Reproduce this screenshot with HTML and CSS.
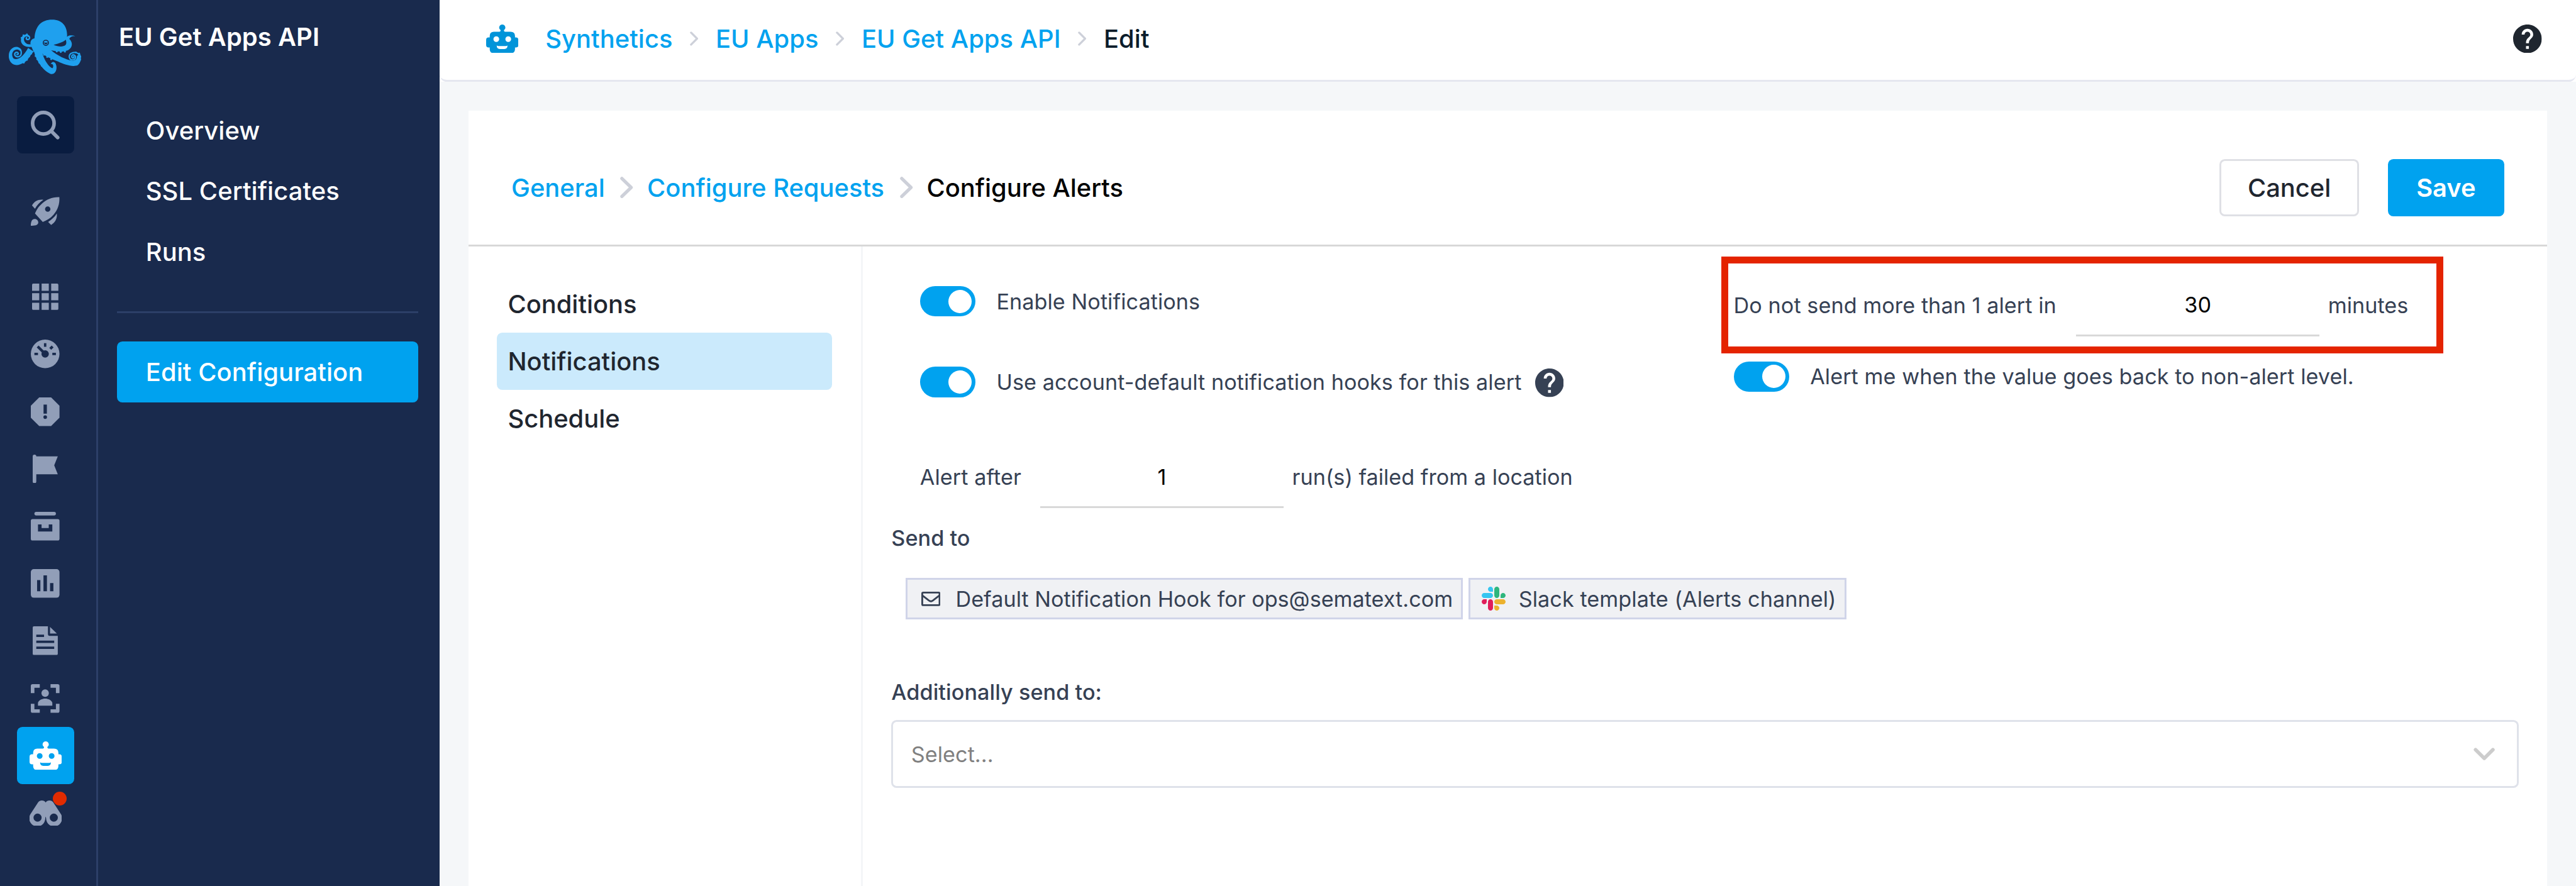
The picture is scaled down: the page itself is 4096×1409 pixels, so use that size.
FILE: index.html
```html
<!DOCTYPE html>
<html lang="en">
<head>
<meta charset="utf-8">
<title>EU Get Apps API</title>
<link rel="stylesheet" href="styles.css">
</head>
<body>
<svg class="defs" aria-hidden="true">
  <symbol id="robot" viewBox="0 0 54 48">
    <path fill-rule="evenodd" d="M27 0a5.2 5.2 0 0 0-2.7 9.6Q24.300 12 22.500 12H13Q6 12 6 19V21.700H4Q0 21.700 0 26V34.500Q0 38.300 4 38.300H6V41Q6 48 13 48H41Q48.300 48 48.300 41V38.300H50Q54 38.300 54 34.500V26Q54 21.700 50 21.700H48.300V19Q48.300 12 41 12H31.500Q29.700 12 29.700 9.600A5.200 5.200 0 0 0 27 0ZM17 19.700a4.800 4.800 0 1 1 0 9.600a4.800 4.800 0 0 1 0-9.600ZM37 19.700a4.800 4.800 0 1 1 0 9.600a4.800 4.800 0 0 1 0-9.600ZM17.700 35Q19 36 21 36H32.500Q35 36 35.700 35Q36 41 30.500 41H23Q17.700 41 17.700 35Z"/>
  </symbol>
  <symbol id="help" viewBox="2 2 20 20">
    <path d="M12 2C6.480 2 2 6.480 2 12s4.480 10 10 10 10-4.480 10-10S17.520 2 12 2zm1 17h-2v-2h2v2zm2.070-7.750l-.9.920C13.450 12.900 13 13.500 13 15h-2v-.5c0-1.100.45-2.100 1.170-2.830l1.240-1.260c.37-.36.59-.86.59-1.410 0-1.100-.9-2-2-2s-2 .9-2 2H8c0-2.210 1.790-4 4-4s4 1.790 4 4c0 .88-.36 1.680-.93 2.250z"/>
  </symbol>
</svg>
<div class="app">
  <nav class="rail">
    <svg class="logo" viewBox="15 25 364 276">
      <g class="logo-fill">
        <path d="M144 120C148 58 178 26 233 26C282 26 308 58 308 104Q308 116 304 124C290 140 264 146 240 152C262 162 288 164 299 154C309 144 301 130 301 122C305 106 328 100 349 109C334 107 321 113 319 123C336 138 335 160 322 172C308 188 270 190 228 180L180 192L140 188L128 160C118 142 126 122 144 120Z"/>
        <path d="M176 190L226 178C262 208 300 226 334 232C350 232 358 222 357 208L372 196C382 212 379 238 362 254C338 266 296 252 262 236C228 222 200 212 176 190Z"/>
        <path d="M142 184C148 226 188 284 224 298C244 304 258 284 254 258C250 234 232 232 225 250C236 244 242 258 235 270C216 266 190 224 182 188Z"/>
        <path d="M112 168L140 186C120 206 112 234 86 244C58 262 24 256 16 220C10 190 26 162 54 162C76 164 86 182 78 200C76 180 60 172 46 178C30 186 28 206 38 220C62 236 94 202 112 168Z"/>
        <path d="M130 162C108 166 80 158 76 134C74 112 88 98 106 100C118 102 126 112 122 122C114 108 98 106 92 118C88 132 98 148 118 150L130 150Z"/>
      </g>
      <g class="logo-line">
        <path d="M77 190C80 210 58 220 46 206C40 192 56 184 62 194Q64 202 56 201"/>
        <path d="M119 120C114 130 98 126 104 116"/>
        <path d="M370 214C372 192 346 184 326 196C312 210 320 230 338 228C354 224 354 204 338 202C328 206 330 218 338 218Q344 216 341 211"/>
      </g>
      <g class="logo-fill">
        <circle cx="79" cy="117" r="4"/><circle cx="88" cy="104" r="4"/><circle cx="106" cy="99" r="4"/>
        <circle cx="90" cy="241" r="5"/><circle cx="106" cy="227" r="5"/><circle cx="117" cy="210" r="5"/><circle cx="127" cy="196" r="5"/>
        <circle cx="150" cy="208" r="5"/><circle cx="158" cy="224" r="5"/><circle cx="169" cy="241" r="5"/><circle cx="181" cy="257" r="5"/>
        <circle cx="192" cy="202" r="5"/><circle cx="208" cy="213" r="5"/><circle cx="228" cy="224" r="5"/>
        <circle cx="256" cy="185" r="5"/><circle cx="276" cy="188" r="5"/><circle cx="297" cy="186" r="5"/>
        <circle cx="352" cy="190" r="4"/><circle cx="369" cy="196" r="4"/><circle cx="375" cy="211" r="4"/><circle cx="374" cy="227" r="4"/>
      </g>
      <circle class="logo-eye" cx="201" cy="142" r="13"/>
      <path class="logo-pupil" d="M191 140Q201 143 211 140Q208 149 201 149Q194 149 191 140Z"/>
    </svg>
    <div class="cell search"><svg class="i48 line" viewBox="0 0 48 48"><circle cx="21" cy="21" r="18"/><path d="M35 35L45 45"/></svg></div>
    <div class="cell"><svg class="i48" viewBox="0 0 48 48"><path fill-rule="evenodd" d="M47.800 .5C36 0 27 4 19 11C12 17 9 23 7 28L20 42C26 40 33 36 38 30C45 22 48.500 12 47.800 .5ZM28.300 16.100a4.500 4.500 0 1 1 0 9a4.500 4.500 0 0 1 0-9Z"/><path d="M2 14.500C6 7 13 4 21 5C15 9 10 14 7 20ZM43.500 28C44.500 36 41 43 34 47L29 42C35 38 40 34 43.500 28ZM0 48.500C0 43 1 37 6.500 37C10 37 12.500 39.500 12.500 43C12.500 48 6 48.500 0 48.500Z"/></svg></div>
    <div class="cell apps"><svg class="i44" viewBox="0 0 44 44"><path d="M2 0H12V12H0V2Q0 0 2 0ZM16 0H28V12H16ZM32 0H42Q44 0 44 2V12H32ZM0 16H12V28H0ZM16 16H28V28H16ZM32 16H44V28H32ZM0 32H12V44H2Q0 44 0 42ZM16 32H28V44H16ZM32 32H44V42Q44 44 42 44H32Z"/></svg></div>
    <div class="cell"><svg class="i48" viewBox="0 0 48 48"><circle cx="24" cy="24" r="24"/><g class="cut"><circle cx="24" cy="24" r="6.200"/><path d="M22 6h4v6h-4zM6 22h6v4H6zM36 22h6v4h-6z"/></g><path class="cutline" d="M24 24L11.500 11.500M32.500 15.500L36.500 11.500"/></svg></div>
    <div class="cell"><svg class="i48" viewBox="0 0 48 48"><path d="M14 0H34L48 14V34L34 48H14L0 34V14Z"/><g class="cut"><path d="M21.300 12h5.600v15.200h-5.600z"/><circle cx="24.100" cy="33" r="3"/></g></svg></div>
    <div class="cell"><svg class="i42" viewBox="0 0 42 48"><rect width="6" height="48" rx="3"/><path d="M5 3H42L36 18L42 33H5Z"/></svg></div>
    <div class="cell"><svg class="i48" viewBox="0 0 48 48"><rect x="6" width="36" height="6" rx="3"/><path fill-rule="evenodd" d="M3 12H45Q48 12 48 15V45Q48 48 45 48H3Q0 48 0 45V15Q0 12 3 12ZM12 21V33H36V21H30V27H18V21Z"/></svg></div>
    <div class="cell"><svg class="i48" viewBox="0 0 48 48"><rect width="48" height="48" rx="5"/><path class="cut" d="M10.500 18.500H16V37H10.500ZM21.200 10.500H27V37H21.200ZM32.200 23.500H37.800V37H32.200Z"/></svg></div>
    <div class="cell"><svg class="i42" viewBox="0 0 42 48"><path d="M2 0H25.500V13Q25.500 16 28.500 16H42V46Q42 48 40 48H2Q0 48 0 46V2Q0 0 2 0ZM29 1L40.500 12H29Z"/><path class="cut" d="M6 14h13v4H6zM6 24h30v4H6zM6 34h30v4H6z"/></svg></div>
    <div class="cell"><svg class="i48" viewBox="0 0 48 48"><path d="M3 0H15V6H6V15H0V3Q0 0 3 0ZM33 0H45Q48 0 48 3V15H42V6H33ZM0 33H6V42H15V48H3Q0 48 0 45ZM42 33H48V45Q48 48 45 48H33V42H42ZM12 36V31C14 26.500 19 24.300 24 24.300S34 26.500 36 31V36Z"/><circle cx="24" cy="15" r="6.200"/></svg></div>
    <div class="cell active"><svg class="robot"><use href="#robot"/></svg></div>
    <div class="cell"><svg class="bino" viewBox="0 0 54 42"><path fill-rule="evenodd" d="M1.800 22.500L14.300 3.200C17 -1 24.500 -1 27 3.500C29.500 -1 37 -1 39.700 3.200L52.200 22.500A13.400 13.400 0 1 1 27.700 30Q27 24 26.300 30A13.400 13.400 0 1 1 1.800 22.500ZM13.400 21.900a6.800 6.800 0 1 0 0 13.600a6.800 6.800 0 0 0 0-13.600ZM40.600 21.900a6.800 6.800 0 1 0 0 13.600a6.800 6.800 0 0 0 0-13.600Z"/></svg><i class="badge"></i></div>
  </nav>
  <aside class="side">
    <h1>EU Get Apps API</h1>
    <a>Overview</a>
    <a>SSL Certificates</a>
    <a>Runs</a>
    <hr>
    <a class="current">Edit Configuration</a>
  </aside>
  <main class="main">
    <div class="topwrap">
      <header class="topbar">
        <svg class="robot blue"><use href="#robot"/></svg>
        <span class="crumbs">
          <a>Synthetics</a><svg class="sep" viewBox="0 0 14 24"><path d="M2 2L12 12L2 22"/></svg>
          <a>EU Apps</a><svg class="sep" viewBox="0 0 14 24"><path d="M2 2L12 12L2 22"/></svg>
          <a>EU Get Apps API</a><svg class="sep" viewBox="0 0 14 24"><path d="M2 2L12 12L2 22"/></svg>
          <b>Edit</b>
        </span>
        <svg class="help"><use href="#help"/></svg>
      </header>
    </div>
    <section class="card">
      <div class="cardhead">
        <div class="steps">
          <a>General</a><svg class="bigsep" viewBox="0 0 22 36"><path d="M3 3L18.500 18L3 33"/></svg>
          <a>Configure Requests</a><svg class="bigsep" viewBox="0 0 22 36"><path d="M3 3L18.500 18L3 33"/></svg>
          <b>Configure Alerts</b>
        </div>
        <button class="btn cancel">Cancel</button>
        <button class="btn save">Save</button>
      </div>
      <div class="cardbody">
        <div class="tabs">
          <a>Conditions</a>
          <a class="on">Notifications</a>
          <a>Schedule</a>
        </div>
        <div class="form">
          <div class="cols">
            <div class="col left">
              <div class="row"><i class="toggle"></i><span>Enable Notifications</span></div>
              <div class="row second"><i class="toggle"></i><span>Use account-default notification hooks for this alert</span><svg class="help inline"><use href="#help"/></svg></div>
              <div class="row field after"><span class="pre">Alert after</span><span class="input">1</span><span class="post">run(s) failed from a location</span></div>
            </div>
            <div class="col right">
              <div class="row field"><span class="pre">Do not send more than 1 alert in</span><span class="input">30</span><span class="post">minutes</span></div>
              <div class="row back"><i class="toggle"></i><span>Alert me when the value goes back to non-alert level.</span></div>
              <div class="highlight"></div>
            </div>
          </div>
          <div class="label">Send to</div>
          <div class="chips">
            <div class="chip mailchip"><svg class="mail" viewBox="0 0 32 24"><rect x="1.500" y="1.500" width="29" height="21" rx="1.500"/><path d="M2 6.500L12.500 14.700Q16 17.300 19.500 14.700L30 6.500"/></svg><span>Default Notification Hook for ops@sematext.com</span></div>
            <div class="chip slackchip"><svg class="slack" viewBox="0 0 122.800 122.800"><path fill="#e01e5a" d="M25.800 77.600c0 7.100-5.800 12.900-12.900 12.900S0 84.700 0 77.600s5.800-12.900 12.900-12.900h12.900v12.900zm6.500 0c0-7.100 5.800-12.900 12.900-12.900s12.900 5.800 12.900 12.900v32.300c0 7.100-5.800 12.900-12.900 12.900s-12.900-5.800-12.900-12.900V77.600z"/><path fill="#36c5f0" d="M45.200 25.800c-7.100 0-12.900-5.800-12.900-12.900S38.100 0 45.200 0s12.900 5.800 12.900 12.900v12.900H45.200zm0 6.500c7.100 0 12.900 5.800 12.900 12.900s-5.800 12.900-12.900 12.900H12.900C5.800 58.100 0 52.300 0 45.200s5.800-12.900 12.900-12.900h32.300z"/><path fill="#2eb67d" d="M97 45.200c0-7.100 5.800-12.900 12.900-12.900s12.900 5.800 12.900 12.900-5.800 12.900-12.900 12.900H97V45.200zm-6.500 0c0 7.100-5.800 12.900-12.900 12.900s-12.900-5.800-12.900-12.900V12.900C64.700 5.800 70.500 0 77.600 0s12.900 5.800 12.900 12.900v32.300z"/><path fill="#ecb22e" d="M77.600 97c7.100 0 12.900 5.800 12.900 12.900s-5.800 12.900-12.900 12.900-12.900-5.800-12.900-12.900V97h12.900zm0-6.500c-7.100 0-12.900-5.800-12.900-12.900s5.800-12.900 12.900-12.900h32.300c7.100 0 12.900 5.800 12.900 12.900s-5.800 12.900-12.900 12.900H77.600z"/></svg><span>Slack template (Alerts channel)</span></div>
          </div>
          <div class="label more">Additionally send to:</div>
          <div class="select"><span>Select...</span><svg class="down" viewBox="0 0 36 22"><path d="M3.500 3.500L18 18L32.500 3.500"/></svg></div>
        </div>
      </div>
    </section>
  </main>
</div>
</body>
</html>
```
FILE: styles.css
```css
/* 1rem = 10 design units */
html { font-size: 9.49907px; }
* { box-sizing: border-box; }
body { margin: 0; font-family: Inter, "Liberation Sans", sans-serif; background: #f5f7f9; overflow: hidden; }
.defs { position: absolute; width: 0; height: 0; }
svg { display: block; flex: none; }
h1, hr { margin: 0; border: 0; }
a, span, b { white-space: nowrap; }
i { flex: none; }

.app { display: flex; height: 1409px; }

/* icon rail */
.rail { width: 16.4rem; flex: none; background: #192a4d; border-right: 3px solid #2c3f68; padding: 3.3rem 0 0 1.5rem; fill: #919eb8; }
.logo { width: 12.13rem; height: 9.2rem; }
.logo-fill { fill: #1fa0ee; }
.logo-line { fill: none; stroke: #1fa0ee; stroke-width: 7; stroke-linecap: round; }
.logo-eye { fill: #1fa0ee; stroke: #192a4d; stroke-width: 5; }
.logo-pupil { fill: #192a4d; }
.cell { position: relative; width: 9.6rem; height: 9.6rem; margin-left: 1.3rem; border-radius: .9rem; display: flex; align-items: center; justify-content: center; }
.search { background: #091c40; margin-top: 3.6rem; margin-bottom: 4.8rem; }
.apps { margin-top: 4.8rem; }
.active { background: #00a2ef; fill: #fff; }
.i48 { width: 4.8rem; height: 4.8rem; overflow: visible; }
.i44 { width: 4.4rem; height: 4.4rem; }
.i42 { width: 4.2rem; height: 4.8rem; }
.line { fill: none; stroke: #919eb8; stroke-width: 6; stroke-linecap: round; }
.cut { fill: #192a4d; }
.cutline { stroke: #192a4d; stroke-width: 4.500; }
.robot { width: 5.4rem; height: 4.8rem; }
.bino { width: 5.4rem; height: 4.2rem; }
.badge { position: absolute; left: 6rem; top: 1.2rem; width: 2.4rem; height: 2.4rem; border-radius: 50%; background: #e02b00; }

/* section navigation */
.side { width: 57.2rem; flex: none; background: #192a4d; color: #fff; padding: 3.2rem 3.6rem 0 3.2rem; font-size: 4.2rem; letter-spacing: .01rem; }
.side h1 { font-size: 4.2rem; font-weight: 600; line-height: 6rem; padding-left: .3rem; margin-bottom: 7.5rem; }
.side a { display: flex; align-items: center; height: 10.2rem; padding-left: 4.8rem; font-weight: 500; border-radius: .9rem; }
.side hr { height: 3px; background: #2c3f68; margin: 4.8rem 0; }
.side .current { background: #00a2ef; }

/* top bar */
.main { flex: 1; min-width: 0; display: flex; flex-direction: column; }
.topwrap { background: #fff; }
.topbar { height: 13.7rem; border-bottom: 3px solid #e5e7f0; border-radius: 0 0 1.2rem 1.2rem; background: #fff; display: flex; align-items: center; padding: 0 5.7rem 4px 7.8rem; font-size: 4.2rem; font-weight: 500; }
.blue { fill: #0094d9; }
.crumbs, .steps { display: flex; align-items: center; flex: 1; }
.crumbs { padding-left: 4.5rem; letter-spacing: .005rem; }
.crumbs a, .steps a { color: #00a2ef; }
.crumbs b { font-weight: 500; color: #0b1c2b; }
.steps b { font-weight: 500; color: #000; }
.sep { width: 1.4rem; height: 2.4rem; margin: 0 2.9rem; fill: none; stroke: #cdd0d9; stroke-width: 3.500; stroke-linecap: round; stroke-linejoin: round; }
.bigsep { width: 2.2rem; height: 3.6rem; margin: 0 2.3rem 0 2.6rem; fill: none; stroke: #cdd0d9; stroke-width: 5.500; stroke-linecap: round; stroke-linejoin: round; }
.help { width: 4.8rem; height: 4.8rem; fill: #1f262f; }

/* card */
.card { flex: 1; margin: 4.8rem 4.8rem 0; background: #fff; display: flex; flex-direction: column; }
.cardhead { height: 22.8rem; flex: none; border-bottom: 3px solid #d8d8d8; display: flex; align-items: flex-start; padding: 8.1rem 7.2rem 0 7.2rem; font-size: 4.2rem; font-weight: 500; }
.steps { height: 9.6rem; }
.btn { height: 9.6rem; border-radius: .9rem; font: 500 4.2rem Inter, "Liberation Sans", sans-serif; padding: 0; margin: 0; color: #1f262f; }
.cancel { width: 23.4rem; border: 3px solid #dfe0e5; background: #fff; margin-right: 4.8rem; }
.save { width: 19.5rem; border: 0; background: #00a2ef; color: #fff; font-weight: 600; }
.cardbody { flex: 1; display: flex; }
.tabs { width: 66rem; flex: none; border-right: 3px solid #f4f6f8; padding: 4.8rem 4.8rem 0; font-size: 4.2rem; font-weight: 500; color: #1f262f; }
.tabs a { display: flex; align-items: center; height: 9.6rem; padding-left: 1.8rem; border-radius: .9rem; }
.tabs .on { background: #cbeafc; }

/* alert form */
.form { flex: 1; padding: 0 4.8rem 0 4.8rem; font-size: 3.6rem; color: #364154; letter-spacing: .006rem; }
.cols { display: flex; padding-left: 4.8rem; height: 47rem; }
.col { position: relative; }
.left { width: 136.2rem; padding-top: 6.6rem; }
.right { padding-top: 4.6rem; }
.row { display: flex; align-items: center; height: 5.1rem; }
.second { margin-top: 8.4rem; }
.toggle { width: 9.3rem; height: 5.1rem; border-radius: 2.55rem; background: #00a2ef; padding: .6rem; margin-right: 3.5rem; display: flex; justify-content: flex-end; }
.toggle::after { content: ""; width: 3.9rem; height: 3.9rem; border-radius: 50%; background: #fff; }
.inline { fill: #364154; margin: .3rem 0 0 2.25rem; }
.field { height: 10.4rem; }
.after { margin-top: 8.2rem; }
.pre { width: 20.1rem; }
.right .pre { width: 57.3rem; }
.input { width: 40.8rem; height: 10.4rem; border-bottom: 3px solid #d9d9d9; display: flex; align-items: center; justify-content: center; color: #000; padding-top: .2rem; }
.post { margin-left: 1.4rem; letter-spacing: 0; }
.back { margin-top: 4.2rem; }
.highlight { position: absolute; left: -2.1rem; top: 1.7rem; width: 120.9rem; height: 16.2rem; border: 11px solid #e42400; }
.label { height: 3.6rem; display: flex; align-items: center; font-weight: 500; }
.chips { display: flex; gap: .9rem; margin: 4.9rem 0 0 2.4rem; }
.chip { height: 6.9rem; border: 3px solid #d0d4e9; background: #f0f1f4; display: flex; align-items: center; padding-left: 2.3rem; }
.mailchip { width: 93.3rem; letter-spacing: 0; }
.slackchip { width: 63.3rem; padding-left: 1.9rem; }
.mail { width: 3.2rem; height: 2.4rem; margin-right: 2.55rem; fill: none; stroke: #364154; stroke-width: 3; }
.slack { width: 4rem; height: 4rem; margin-right: 2.2rem; }
.more { margin-top: 10.4rem; }
.select { height: 11.4rem; margin-top: 2.8rem; border: 3px solid #dfe2ea; border-radius: .9rem; display: flex; align-items: center; justify-content: space-between; padding: .2rem 3.6rem 0 3rem; color: #808080; }
.down { width: 3.6rem; height: 2.2rem; fill: none; stroke: #ccc; stroke-width: 6; stroke-linecap: round; stroke-linejoin: round; }
```
